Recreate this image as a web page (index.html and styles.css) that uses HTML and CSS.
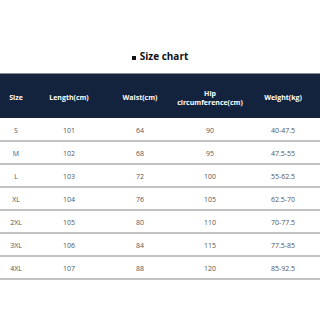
FILE: index.html
```html
<!DOCTYPE html>
<html>
<head>
<meta charset="utf-8">
<link rel="stylesheet" href="styles.css">
</head>
<body>
<div class="page">
  <div class="title"><span class="bullet"></span>Size chart</div>
  <div class="table">
    <div class="row head">
      <div>Size</div><div>Length(cm)</div><div>Waist(cm)</div><div>Hip<br>circumference(cm)</div><div>Weight(kg)</div>
    </div>
    <div class="row first"><div>S</div><div>101</div><div>64</div><div>90</div><div>40-47.5</div></div>
    <div class="row"><div>M</div><div>102</div><div>68</div><div>95</div><div>47.5-55</div></div>
    <div class="row"><div>L</div><div>103</div><div>72</div><div>100</div><div>55-62.5</div></div>
    <div class="row"><div>XL</div><div>104</div><div>76</div><div>105</div><div>62.5-70</div></div>
    <div class="row"><div>2XL</div><div>105</div><div>80</div><div>110</div><div>70-77.5</div></div>
    <div class="row"><div>3XL</div><div>106</div><div>84</div><div>115</div><div>77.5-85</div></div>
    <div class="row"><div>4XL</div><div>107</div><div>88</div><div>120</div><div>85-92.5</div></div>
  </div>
</div>
</body>
</html>
```
FILE: styles.css
```css
html, body {
  margin: 0;
  padding: 0;
  background: #ffffff;
}
.page {
  width: 320px;
  height: 320px;
  font-family: "Open Sans", "Noto Sans", sans-serif;
}
.title {
  height: 73px;
  box-sizing: border-box;
  padding-top: 49px;
  font-size: 10px;
  line-height: 14px;
  font-weight: 700;
  color: #111111;
  display: flex;
  justify-content: center;
  align-items: baseline;
  gap: 4px;
}
.bullet {
  width: 4px;
  height: 4px;
  background: #111111;
  display: inline-block;
}
.table {
  display: flex;
  flex-direction: column;
}
.row {
  display: grid;
  grid-template-columns: 32px 74px 68px 72px 74px;
  height: 23px;
  box-sizing: border-box;
  border-bottom: 2px solid #c2c2c2;
  align-items: center;
  text-align: center;
  font-size: 7px;
  line-height: 9px;
  color: #555555;
  padding-top: 1px;
}
.row.first {
  height: 24px;
  padding-top: 2px;
}
.row.head {
  height: 45px;
  background: #13233e;
  color: #ffffff;
  font-weight: 700;
  border-top: 1px solid #8a8f96;
  border-bottom: none;
  padding-top: 3px;
}
```
